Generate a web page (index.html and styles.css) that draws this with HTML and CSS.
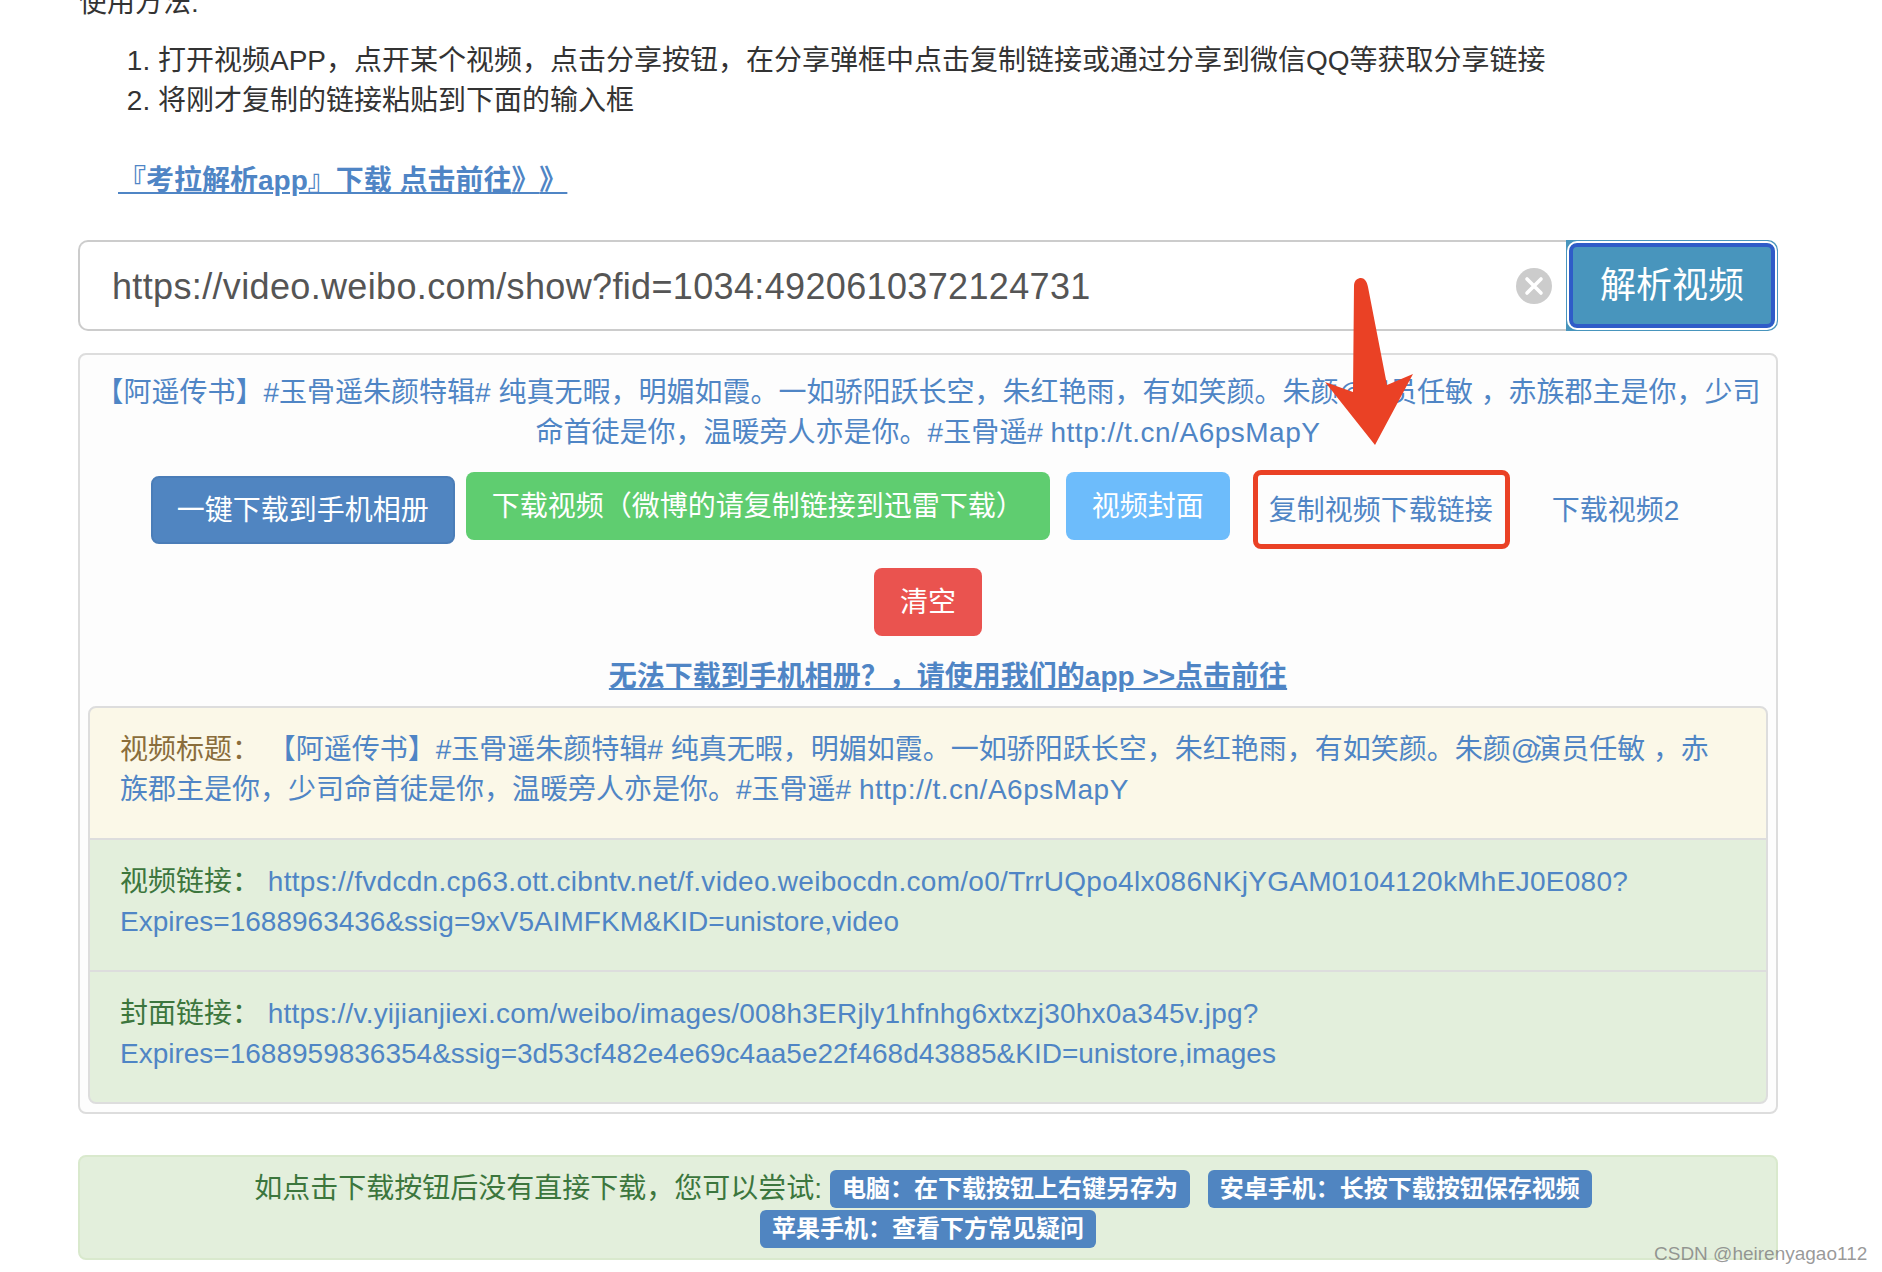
FILE: index.html
```html
<!DOCTYPE html>
<html lang="zh-CN">
<head>
<meta charset="utf-8">
<title>视频解析</title>
<link rel="stylesheet" href="styles.css">
</head>
<body>
<main class="page">
  <p class="intro">使用方法:</p>
  <ol class="steps">
    <li>打开视频APP，点开某个视频，点击分享按钮，在分享弹框中点击复制链接或通过分享到微信QQ等获取分享链接</li>
    <li>将刚才复制的链接粘贴到下面的输入框</li>
  </ol>
  <p class="app-line"><a class="app-link" href="#">『考拉解析app』下载 点击前往<span class="tight-quote">》 </span>》</a></p>

  <div class="search">
    <div class="search-field">
      <span class="search-value">https://video.weibo.com/show?fid=1034:4920610372124731</span>
      <svg class="clear-icon" viewBox="0 0 36 36" width="36" height="36" aria-hidden="true">
        <circle cx="18" cy="18" r="18" fill="#ccc"/>
        <path d="M11 11 L25 25 M25 11 L11 25" stroke="#fff" stroke-width="3.6" stroke-linecap="round" fill="none"/>
      </svg>
    </div>
    <button class="search-btn"><span class="search-btn-inner">解析视频</span></button>
  </div>

  <section class="panel">
    <p class="summary"><a href="#">【阿遥传书】#玉骨遥朱颜特辑# 纯真无暇，明媚如霞。一如骄阳跃长空，朱红艳雨，有如笑颜。朱颜<span class="tight-at">@</span>演员任敏 <span class="tight-comma">，</span> 赤族郡主是你，少司命首徒是你，温暖旁人亦是你。#玉骨遥# <span class="url-short">http://t.cn/A6psMapY</span></a></p>
    <div class="btn-row">
      <a class="btn btn-blue" href="#">一键下载到手机相册</a>
      <a class="btn btn-green" href="#">下载视频（微博的请复制链接到迅雷下载）</a>
      <a class="btn btn-sky" href="#">视频封面</a>
      <a class="btn btn-link btn-marked" href="#">复制视频下载链接</a>
      <a class="btn btn-link" href="#">下载视频2</a>
    </div>
    <div class="btn-row btn-row-second">
      <a class="btn btn-red" href="#">清空</a>
    </div>
    <p class="app-tip"><a href="#">无法下载到手机相册？，请使用我们的app &gt;&gt;点击前往</a></p>
    <ul class="results">
      <li class="result result-warn"><span class="result-label">视频标题：</span> <a href="#">【阿遥传书】#玉骨遥朱颜特辑# 纯真无暇，明媚如霞。一如骄阳跃长空，朱红艳雨，有如笑颜。朱颜<span class="tight-at">@</span>演员任敏 <span class="tight-comma">，</span> 赤族郡主是你，少司命首徒是你，温暖旁人亦是你。#玉骨遥# <span class="url-short">http://t.cn/A6psMapY</span></a></li>
      <li class="result result-ok"><span class="result-label">视频链接：</span> <a href="#"><span class="url-video">https://fvdcdn.cp63.ott.cibntv.net/f.video.weibocdn.com/o0/TrrUQpo4lx086NKjYGAM0104120kMhEJ0E080?</span>Expires=1688963436&amp;ssig=9xV5AIMFKM&amp;KID=unistore,video</a></li>
      <li class="result result-ok"><span class="result-label">封面链接：</span> <a href="#"><span class="url-cover">https://v.yijianjiexi.com/weibo/images/008h3ERjly1hfnhg6xtxzj30hx0a345v.jpg?</span>Expires=1688959836354&amp;ssig=3d53cf482e4e69c4aa5e22f468d43885&amp;KID=unistore,images</a></li>
    </ul>
  </section>

  <div class="notice">如点击下载按钮后没有直接下载，您可以尝试: <span class="tag tag-spaced">电脑：在下载按钮上右键另存为</span> <span class="tag tag-spaced">安卓手机：长按下载按钮保存视频</span> <span class="tag">苹果手机：查看下方常见疑问</span></div>
</main>

<svg class="arrow" viewBox="0 0 100 180" width="100" height="180" aria-hidden="true">
  <path d="M29 14 C29 8 33 6 36 6 C39 6 42 9 43 15 L62 113 L88 102 L50 173 L0 110 L28 120 Z" fill="#ea4125"/>
</svg>
<span class="watermark">CSDN @heirenyagao112</span>
</body>
</html>
```
FILE: styles.css
```css
*, *::after { box-sizing: border-box; }
html, body { margin: 0; padding: 0; background: #fff; }
body {
  font-family: "Liberation Sans", "Noto Sans CJK SC", sans-serif;
  font-size: 28px;
  line-height: 40px;
  color: #333;
  height: 1272px;
  overflow: hidden;
  position: relative;
}
a { color: #4f85c5; text-decoration: none; }
.page { width: 1700px; margin: -17px 0 0 78px; }
.intro { margin: 0 0 18px; padding-left: 1px; }
.steps { margin: 0 0 40px; padding: 0 0 0 80px; }
.app-line { margin: 0 0 39px 40px; }
.app-link { font-weight: 700; text-decoration: underline; }
.tight-quote { letter-spacing: -4px; }

.search { display: flex; height: 91px; }
.search-field {
  flex: 1;
  display: flex;
  align-items: center;
  justify-content: space-between;
  padding: 0 14px 0 32px;
  border: 2px solid #ccc;
  border-right: 0;
  border-radius: 10px 0 0 10px;
  background: #fff;
}
.search-value { padding-top: 2px; font-size: 36px; letter-spacing: 0.35px; color: #555; }
.clear-icon { display: block; }
.search-btn {
  width: 212px;
  padding: 3px;
  border: 0;
  border-radius: 0 10px 10px 0;
  background: #4895bd;
  font: inherit;
}
.search-btn-inner {
  display: flex;
  align-items: center;
  justify-content: center;
  height: 100%;
  border-radius: 8px;
  border: 4px solid #2f5cc8;
  outline: 2px solid #fff;
  background: #4895bd;
  color: #fff;
  font-size: 36px;
}

.panel {
  margin-top: 22px;
  padding: 18px 8px 8px;
  border: 2px solid #ddd;
  border-radius: 8px;
  background: #fdfdfd;
}
.summary { margin: 0 4px; text-align: center; }
.tight-at { letter-spacing: -6px; }
.tight-comma { letter-spacing: -8px; }
.url-short { letter-spacing: 0.5px; }
.url-video { letter-spacing: 0.29px; }
.url-cover { letter-spacing: 0.21px; }
.btn-row { display: flex; justify-content: center; align-items: flex-start; margin-top: 19px; }
.btn-row-second { margin-top: 24px; }
.btn {
  display: block;
  padding: 13px 24px 0;
  border: 2px solid transparent;
  border-radius: 8px;
  height: 68px;
  color: #fff;
  white-space: nowrap;
}
.btn-blue { margin-top: 4px; margin-right: 11px; background: #5085c1; border-color: #4a7db8; }
.btn-green { margin-right: 16px; background: #5fcd70; }
.btn-sky { margin-right: 13px; background: #6dbcfb; }
.btn-link { margin-top: 4px; color: #4f85c5; }
.btn-marked { position: relative; margin-right: 7px; }
.btn-marked::after {
  content: "";
  position: absolute;
  left: 8px;
  top: -8px;
  width: 257px;
  height: 79px;
  border: 5px solid #ea4125;
  border-radius: 8px;
}
.btn-red { background: #ea534f; }
.app-tip { margin: 21px 0 9px; padding-left: 40px; text-align: center; font-weight: 700; }
.app-tip a { text-decoration: underline; }

.results { list-style: none; margin: 0; padding: 0; }
.result {
  height: 134px;
  margin-bottom: -2px;
  padding: 22px 30px 0;
  border: 2px solid #ddd;
}
.result:first-child { border-radius: 8px 8px 0 0; }
.result:last-child { margin-bottom: 0; border-radius: 0 0 8px 8px; }
.result-warn { background: #fbf8e8; }
.result-warn .result-label { color: #8a6d3b; }
.result-ok { background: #e3efdc; }
.result-ok .result-label { color: #3c763d; }

.notice {
  margin-top: 41px;
  height: 105px;
  padding: 12px 10px 0;
  border: 2px solid #d9e9cd;
  border-radius: 8px;
  background: #e3efdc;
  color: #3c763d;
  text-align: center;
}
.tag {
  display: inline-block;
  padding: 0 12px;
  border-radius: 6px;
  background: #5085c1;
  color: #fff;
  font-size: 24px;
  font-weight: 700;
  line-height: 38px;
  vertical-align: top;
  margin-top: 1px;
}
.tag-spaced { margin-right: 10px; }

.arrow { position: absolute; left: 1325px; top: 272px; }
.watermark {
  position: absolute;
  left: 1654px;
  top: 1240px;
  font-size: 19px;
  line-height: 28px;
  color: rgba(120, 120, 120, 0.75);
  white-space: nowrap;
}
```
